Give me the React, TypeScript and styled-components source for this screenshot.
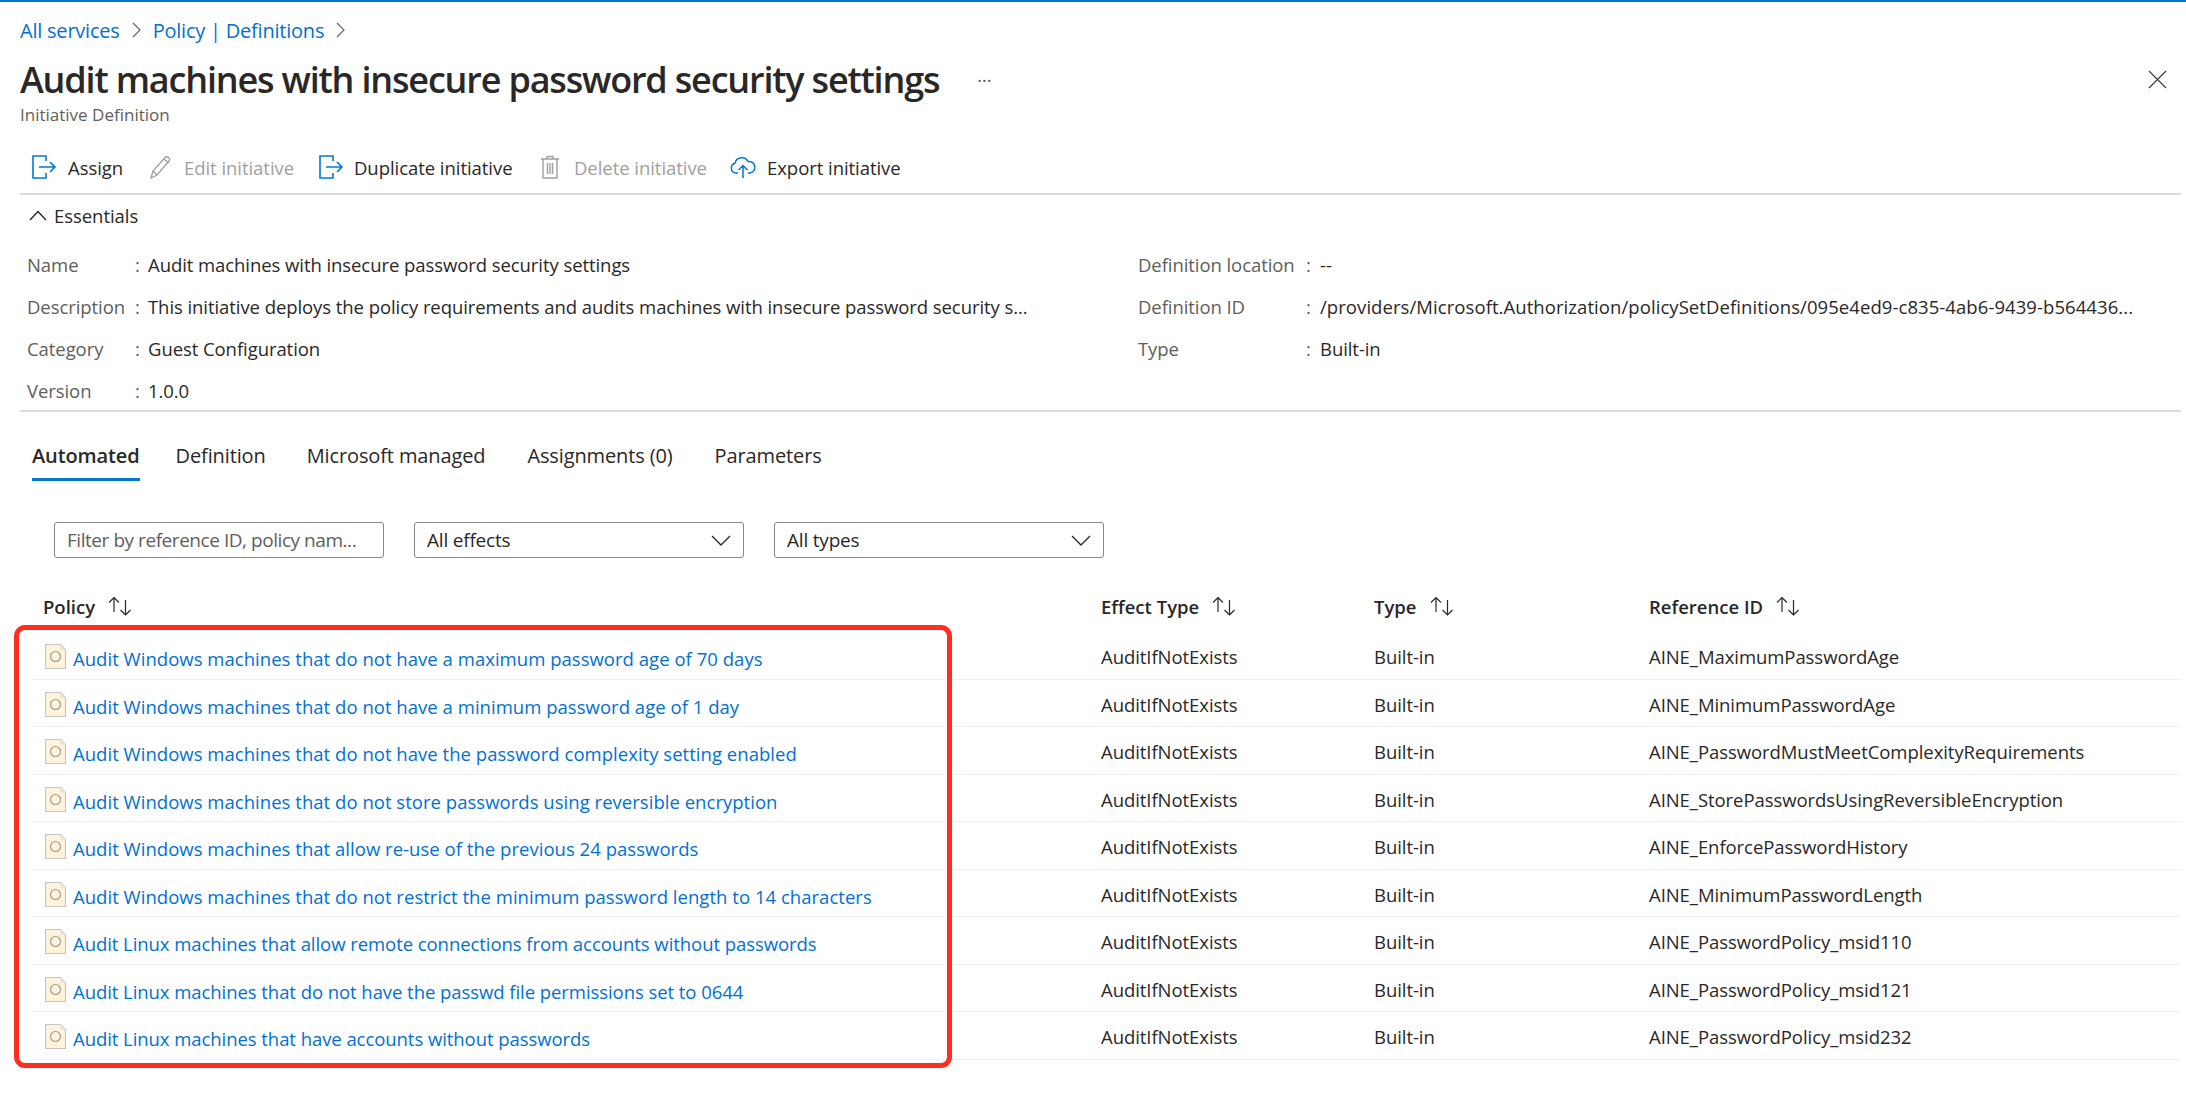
import React from "react";
import styled, { createGlobalStyle } from "styled-components";

const Global = createGlobalStyle`
  html, body { margin: 0; padding: 0; background: #fff; }
  body { font-family: "Open Sans", "Noto Sans", "Liberation Sans", sans-serif; color: #292827; }
  * { box-sizing: border-box; }
`;

const BLUE = "#0078d4";
const LINK = "#0070d6";

const Page = styled.div`
  position: relative;
  width: 2186px;
  height: 1104px;
  overflow: hidden;
  border-top: 2px solid ${BLUE};
  padding: 0 5px 0 20px;
`;
const Crumbs = styled.nav`
  height: 56px;
  display: flex;
  align-items: center;
  gap: 12px;
  font-size: 20px;
  letter-spacing: -0.22px;
`;
const Crumb = styled.a`color: ${LINK};`;
const TitleRow = styled.div`
  height: 44px;
  padding-bottom: 2px;
  display: flex;
  align-items: center;
`;
const Title = styled.h1`
  margin: 0;
  font-size: 36px;
  font-weight: 600;
  letter-spacing: -1.18px;
  white-space: nowrap;
  color: #292827;
`;
const More = styled.span`
  margin-left: 38px;
  font-size: 18px;
  line-height: 1;
  color: #555;
  transform: translateY(-4px);
`;
const Close = styled.span`
  margin-left: auto;
  margin-right: 14px;
  display: flex;
`;
const Subtitle = styled.div`
  height: 26px;
  line-height: 26px;
  font-size: 17px;
  letter-spacing: 0;
  color: #605e5c;
`;
const Toolbar = styled.div`
  margin-top: 14px;
  height: 53px;
  display: flex;
  align-items: center;
  padding-left: 11px;
  padding-bottom: 1px;
  border-bottom: 2px solid #dcdcdc;
`;
const Action = styled.span<{ $off?: boolean; $w: number; $gap: number }>`
  width: ${(p) => p.$w}px;
  display: flex;
  align-items: center;
  gap: ${(p) => p.$gap}px;
  font-size: 18.5px;
  letter-spacing: -0.05px;
  white-space: nowrap;
  color: ${(p) => (p.$off ? "#a19f9d" : "#292827")};
`;
const EssHead = styled.div`
  height: 41px;
  display: flex;
  align-items: center;
  gap: 7px;
  padding-left: 9px;
  font-size: 18.5px;
  letter-spacing: -0.05px;
  font-weight: 500;
`;
const EssGrid = styled.div`
  display: grid;
  grid-template-columns: 1111px 1fr;
  padding-left: 7px;
  margin-top: 7px;
  height: 169px;
  border-bottom: 2px solid #dcdcdc;
`;
const EssRow = styled.div<{ $label: number; $colon: number }>`
  height: 42px;
  display: grid;
  grid-template-columns: ${(p) => p.$label}px ${(p) => p.$colon}px 1fr;
  align-items: center;
  font-size: 18.5px;
  letter-spacing: -0.07px;
  white-space: nowrap;
`;
const EssLabel = styled.span`color: #605e5c;`;
const EssValue = styled.span<{ $ls?: number }>`
  color: #292827;
  letter-spacing: ${(p) => p.$ls ?? -0.07}px;
`;
const Tabs = styled.div`
  height: 69px;
  display: flex;
  align-items: flex-end;
  padding-left: 12px;
`;
const Tab = styled.span<{ $active?: boolean; $ml: number }>`
  margin-left: ${(p) => p.$ml}px;
  height: 47px;
  font-size: 20px;
  letter-spacing: -0.12px;
  line-height: 44px;
  font-weight: ${(p) => (p.$active ? 600 : 400)};
  white-space: nowrap;
  border-bottom: 3px solid ${(p) => (p.$active ? BLUE : "transparent")};
`;
const Filters = styled.div`
  margin-top: 41px;
  padding-left: 34px;
  display: flex;
  gap: 30px;
`;
const FilterBox = styled.div<{ $placeholder?: boolean }>`
  width: 330px;
  height: 36px;
  border: 1.5px solid #8a8886;
  border-radius: 3px;
  display: flex;
  align-items: center;
  justify-content: space-between;
  padding: 0 12px;
  font-size: 19px;
  letter-spacing: ${(p) => (p.$placeholder ? "-0.45px" : "-0.2px")};
  white-space: nowrap;
  color: ${(p) => (p.$placeholder ? "#605e5c" : "#292827")};
`;
const RowGrid = styled.div`
  display: grid;
  grid-template-columns: 1069px 273px 275px 1fr;
  align-items: center;
`;
const HeadRow = styled(RowGrid)`
  margin-top: 22px;
  margin-left: 12px;
  height: 52px;
  font-size: 18.5px;
  letter-spacing: 0;
  font-weight: 600;
`;
const HeadCell = styled.span<{ $pl?: number }>`
  display: flex;
  align-items: center;
  gap: 12px;
  padding-left: ${(p) => p.$pl ?? 0}px;
`;
const DataRow = styled(RowGrid)`
  margin-left: 12px;
  height: 47.5px;
  padding-top: 3px;
  border-bottom: 1.5px solid #f0f0f0;
  font-size: 18.5px;
  letter-spacing: -0.06px;
  white-space: nowrap;
`;
const PolicyCell = styled.span`
  display: flex;
  align-items: center;
  gap: 7px;
  padding-left: 13px;
`;
const PolicyLink = styled.a<{ $ls: number }>`
  color: ${LINK};
  letter-spacing: ${(p) => p.$ls}px;
  transform: translateY(1.5px);
`;
const Highlight = styled.div`
  position: absolute;
  left: 14px;
  top: 623px;
  width: 938px;
  height: 443px;
  border: 5px solid #ff2d20;
  border-radius: 11px;
  pointer-events: none;
`;

const AssignIcon = () => (
  <svg width="26" height="26" viewBox="0 0 26 26" fill="none" stroke={BLUE} strokeWidth="1.6">
    <path d="M15 7V2H2v22h13v-5" />
    <path d="M8 13h16M19 8l5 5-5 5" />
  </svg>
);
const PencilIcon = () => (
  <svg width="22" height="24" viewBox="0 0 22 24" fill="none" stroke="#a19f9d" strokeWidth="1.3">
    <path d="M1 23l2-7L15 2.500c1-1 2.500-1 3.500 0s1.500 2.500.5 3.500L7 20z" />
    <path d="M3 16l4 4M14 4l4.500 4" />
  </svg>
);
const TrashIcon = () => (
  <svg width="20" height="24" viewBox="0 0 20 24" fill="none" stroke="#a19f9d" strokeWidth="1.4">
    <path d="M1 4h18M7 4V1.500h6V4M3 4v19h14V4" />
    <path d="M7.500 8v11M10 8v11M12.500 8v11" />
  </svg>
);
const CloudIcon = () => (
  <svg width="26" height="24" viewBox="0 0 26 24" fill="none" stroke={BLUE} strokeWidth="1.5">
    <path d="M8 18H6a5 5 0 0 1-1-9.800A7 7 0 0 1 18 6.500 5.800 5.800 0 0 1 20 18h-2" />
    <path d="M13 23V11M8.500 15l4.500-4.500 4.500 4.500" />
  </svg>
);
const ChevronRight = () => (
  <svg width="9" height="16" viewBox="0 0 9 16" fill="none" stroke="#605e5c" strokeWidth="1.1">
    <path d="M1 1l7 7-7 7" />
  </svg>
);
const ChevronUp = () => (
  <svg width="18" height="11" viewBox="0 0 18 11" fill="none" stroke="#292827" strokeWidth="1.4">
    <path d="M1 10l8-8.500 8 8.500" />
  </svg>
);
const ChevronDown = () => (
  <svg width="20" height="11" viewBox="0 0 20 11" fill="none" stroke="#292827" strokeWidth="1.4">
    <path d="M1 1l9 9 9-9" />
  </svg>
);
const CloseIcon = () => (
  <svg width="19" height="19" viewBox="0 0 19 19" fill="none" stroke="#3b3a39" strokeWidth="1.1">
    <path d="M1 1l17 17M18 1L1 18" />
  </svg>
);
const SortIcon = () => (
  <svg width="26" height="20" viewBox="0 0 26 20" fill="none" stroke="#292827" strokeWidth="1.2">
    <path d="M7 16V1.500M2 6.500l5-5 5 5" />
    <path d="M18.500 4v15M13.500 14l5 5 5-5" />
  </svg>
);
const PolicyIcon = () => (
  <svg width="21" height="25" viewBox="0 0 21 25">
    <path d="M.5.500h15l5 5v19H.5z" fill="#fff3d9" stroke="#c8c6c4" strokeWidth="1.2" />
    <path d="M15.500.500v5h5z" fill="#e4e2df" />
    <circle cx="10.500" cy="12.500" r="5" fill="none" stroke="#a19f9d" strokeWidth="1.2" />
  </svg>
);

const rows = [
  ["Audit Windows machines that do not have a maximum password age of 70 days", "AINE_MaximumPasswordAge"],
  ["Audit Windows machines that do not have a minimum password age of 1 day", "AINE_MinimumPasswordAge"],
  ["Audit Windows machines that do not have the password complexity setting enabled", "AINE_PasswordMustMeetComplexityRequirements"],
  ["Audit Windows machines that do not store passwords using reversible encryption", "AINE_StorePasswordsUsingReversibleEncryption"],
  ["Audit Windows machines that allow re-use of the previous 24 passwords", "AINE_EnforcePasswordHistory"],
  ["Audit Windows machines that do not restrict the minimum password length to 14 characters", "AINE_MinimumPasswordLength"],
  ["Audit Linux machines that allow remote connections from accounts without passwords", "AINE_PasswordPolicy_msid110"],
  ["Audit Linux machines that do not have the passwd file permissions set to 0644", "AINE_PasswordPolicy_msid121"],
  ["Audit Linux machines that have accounts without passwords", "AINE_PasswordPolicy_msid232"],
];

const left = [
  ["Name", "Audit machines with insecure password security settings"],
  ["Description", "This initiative deploys the policy requirements and audits machines with insecure password security s..."],
  ["Category", "Guest Configuration"],
  ["Version", "1.0.0"],
];
const right = [
  ["Definition location", "--"],
  ["Definition ID", "/providers/Microsoft.Authorization/policySetDefinitions/095e4ed9-c835-4ab6-9439-b564436..."],
  ["Type", "Built-in"],
];

export default function App() {
  return (
    <Page>
      <Global />
      <Crumbs>
        <Crumb>All services</Crumb>
        <ChevronRight />
        <Crumb>Policy | Definitions</Crumb>
        <ChevronRight />
      </Crumbs>
      <TitleRow>
        <Title>Audit machines with insecure password security settings</Title>
        <More>...</More>
        <Close><CloseIcon /></Close>
      </TitleRow>
      <Subtitle>Initiative Definition</Subtitle>
      <Toolbar>
        <Action $w={119} $gap={11}><AssignIcon />Assign</Action>
        <Action $w={168} $gap={12} $off><PencilIcon />Edit initiative</Action>
        <Action $w={222} $gap={10}><AssignIcon />Duplicate initiative</Action>
        <Action $w={190} $gap={14} $off><TrashIcon />Delete initiative</Action>
        <Action $w={180} $gap={11}><CloudIcon />Export initiative</Action>
      </Toolbar>
      <EssHead><ChevronUp />Essentials</EssHead>
      <EssGrid>
        <div>
          {left.map(([k, v]) => (
            <EssRow key={k} $label={108} $colon={13}>
              <EssLabel>{k}</EssLabel>
              <EssLabel>:</EssLabel>
              <EssValue>{v}</EssValue>
            </EssRow>
          ))}
        </div>
        <div>
          {right.map(([k, v]) => (
            <EssRow key={k} $label={168} $colon={14}>
              <EssLabel>{k}</EssLabel>
              <EssLabel>:</EssLabel>
              <EssValue $ls={k === "Definition ID" ? 0.07 : undefined}>{v}</EssValue>
            </EssRow>
          ))}
        </div>
      </EssGrid>
      <Tabs>
        <Tab $active $ml={0}>Automated</Tab>
        <Tab $ml={36}>Definition</Tab>
        <Tab $ml={41}>Microsoft managed</Tab>
        <Tab $ml={42}>Assignments (0)</Tab>
        <Tab $ml={42}>Parameters</Tab>
      </Tabs>
      <Filters>
        <FilterBox $placeholder>Filter by reference ID, policy nam...</FilterBox>
        <FilterBox>All effects<ChevronDown /></FilterBox>
        <FilterBox>All types<ChevronDown /></FilterBox>
      </Filters>
      <HeadRow>
        <HeadCell $pl={11}>Policy<SortIcon /></HeadCell>
        <HeadCell>Effect Type<SortIcon /></HeadCell>
        <HeadCell>Type<SortIcon /></HeadCell>
        <HeadCell>Reference ID<SortIcon /></HeadCell>
      </HeadRow>
      {rows.map(([name, ref]) => (
        <DataRow key={ref}>
          <PolicyCell>
            <PolicyIcon />
            <PolicyLink $ls={name.includes("Windows") ? 0.03 : -0.06}>{name}</PolicyLink>
          </PolicyCell>
          <span>AuditIfNotExists</span>
          <span>Built-in</span>
          <span>{ref}</span>
        </DataRow>
      ))}
      <Highlight />
    </Page>
  );
}
